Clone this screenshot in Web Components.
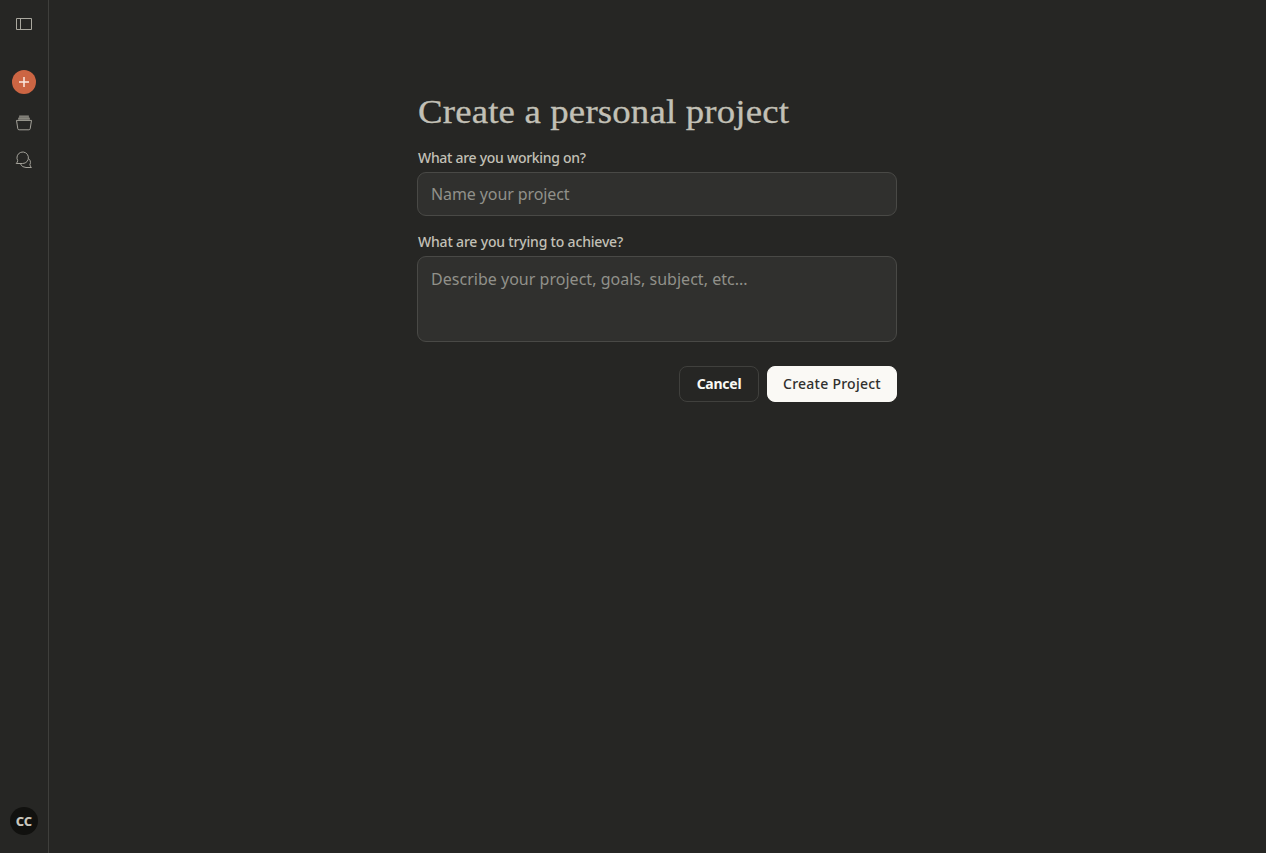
<!DOCTYPE html>
<html lang="en">
<head>
<meta charset="utf-8">
<title>Create a personal project</title>
<style>
	html, body { height: 100%; }
	body {
		margin: 0;
		background: #262624;
		color: #c2c0b6;
		font-family: "Noto Sans", "Open Sans", sans-serif;
		overflow: hidden;
	}
</style>
</head>
<body>
<app-shell>
	<side-bar slot="nav">
		<nav-button label="Open sidebar">
			<svg width="18" height="16" viewBox="0 0 18 16" fill="none" stroke="#aaa89f"><path d="M1.5 2.5h15v11h-15zM5.5 2.5v11"/></svg>
		</nav-button>
		<nav-button class="new" variant="accent" label="New chat">
			<svg width="12" height="12" viewBox="0 0 12 12" stroke="#fbe9e1" stroke-width="1.5"><path d="M6 1v10M1 6h10"/></svg>
		</nav-button>
		<nav-button class="projects" label="Projects">
			<svg width="18" height="18" viewBox="0 0 18 18" fill="none" stroke="#a3a199" stroke-linejoin="round"><path d="M1.5 6.4h15l-1.3 8.3q-.2 1.1-1.3 1.1H4.1q-1.1 0-1.3-1.1z"/><path d="M3 5.9 4.3 2h9.4L15 5.9z" fill="#74726c" stroke="none"/><path d="M3.1 4.3h11.8M4.2 2h9.6" stroke="#8d8b83"/></svg>
		</nav-button>
		<nav-button class="chats" label="Chats">
			<svg width="18" height="18" viewBox="0 0 18 18" fill="none" stroke="#a3a199" stroke-linejoin="round"><path d="M1.2 12.5H7.7A5.75 5.75 0 1 0 2.7 9.6Q2.6 11.2 1.2 12.5z"/><path d="M5.4 12.8Q6.8 16.5 11 16.5h5.4Q15.1 15.2 14.9 13.7Q16 11.6 15.1 9.6Q14.6 8.3 13.6 7.7"/></svg>
		</nav-button>
		<user-avatar slot="footer">CC</user-avatar>
	</side-bar>
	<project-form>
		<span slot="title">Create a personal project</span>
		<form-field class="name" label="What are you working on?" placeholder="Name your project"></form-field>
		<form-field class="description" label="What are you trying to achieve?" placeholder="Describe your project, goals, subject, etc..." multiline></form-field>
		<action-button slot="actions">Cancel</action-button>
		<action-button slot="actions" variant="primary">Create Project</action-button>
	</project-form>
</app-shell>
<script>
// attaches an open shadow root filled from the given markup
const render = (el, html) => {
	const template = document.createElement('template');
	template.innerHTML = html;
	el.attachShadow({ mode: 'open' }).appendChild(template.content.cloneNode(true));
};

class AppShell extends HTMLElement {
	constructor() {
		super();
		render(this, `
<style>
	:host { display: grid; grid-template-columns: 49px 1fr; height: 100vh; }
	main { display: flex; justify-content: center; align-items: flex-start; padding-right: 1px; }
</style>
<slot name="nav"></slot>
<main><slot></slot></main>
`);
	}
}

class SideBar extends HTMLElement {
	constructor() {
		super();
		render(this, `
<style>
	:host {
		display: flex;
		flex-direction: column;
		box-sizing: border-box;
		padding: 12px 0 18px;
		border-right: 1px solid #3f3f3c;
	}
	nav { display: flex; flex-direction: column; align-items: center; flex: 1; }
	footer { display: flex; justify-content: center; }
	::slotted(.new) { margin-top: 34px; }
	::slotted(.projects) { margin-top: 17px; }
	::slotted(.chats) { margin-top: 13px; }
</style>
<nav><slot></slot></nav>
<footer><slot name="footer"></slot></footer>
`);
	}
}

class NavButton extends HTMLElement {
	constructor() {
		super();
		render(this, `
<style>
	:host { display: block; width: 24px; height: 24px; }
	button {
		display: flex;
		align-items: center;
		justify-content: center;
		width: 100%;
		height: 100%;
		padding: 0;
		border: 0;
		border-radius: 50%;
		background: none;
		cursor: pointer;
	}
	:host([variant="accent"]) button { background: #cc6543; }
</style>
<button><slot></slot></button>
`);
		this.shadowRoot.querySelector('button').setAttribute('aria-label', this.getAttribute('label'));
	}
}

class UserAvatar extends HTMLElement {
	constructor() {
		super();
		render(this, `
<style>
	:host {
		display: flex;
		align-items: center;
		justify-content: center;
		width: 28px;
		height: 28px;
		border-radius: 50%;
		background: #11110f;
		color: #c8c6bc;
		font-size: 13px;
		font-weight: 800;
	}
</style>
<slot></slot>
`);
	}
}

class ProjectForm extends HTMLElement {
	constructor() {
		super();
		render(this, `
<style>
	:host { display: block; width: 480px; padding-top: 92px; }
	h1 {
		margin: 0 0 16px 1px;
		font: 400 34px/40px "Liberation Serif", serif;
		letter-spacing: 0.15px;
		white-space: nowrap;
		transform: scaleX(1.083);
		transform-origin: left;
		-webkit-text-stroke: 0.3px currentColor;
	}
	.fields { display: flex; flex-direction: column; gap: 16px; }
	.actions { display: flex; justify-content: flex-end; gap: 8px; margin-top: 24px; }
	::slotted(.name) { --label-spacing: -0.29px; --control-spacing: -0.1px; }
	::slotted(.description) { --label-spacing: -0.18px; --control-spacing: 0.02px; }
</style>
<h1><slot name="title"></slot></h1>
<div class="fields"><slot></slot></div>
<div class="actions"><slot name="actions"></slot></div>
`);
	}
}

class FormField extends HTMLElement {
	constructor() {
		super();
		const control = this.hasAttribute('multiline')
			? '<textarea id="control"></textarea>'
			: '<input id="control" type="text">';
		render(this, `
<style>
	:host { display: flex; flex-direction: column; gap: 4px; }
	label {
		padding-left: 1px;
		font-size: 14px;
		font-weight: 500;
		line-height: 20px;
		letter-spacing: var(--label-spacing, 0);
	}
	#control {
		display: block;
		box-sizing: border-box;
		width: 100%;
		height: 44px;
		padding: 0 13px;
		border: 1px solid #494946;
		border-radius: 9px;
		outline: none;
		resize: none;
		background: #30302e;
		color: inherit;
		font: 400 16px/24px "Noto Sans", sans-serif;
		letter-spacing: var(--control-spacing, 0);
	}
	textarea#control { height: 86px; padding: 10px 13px; }
	#control::placeholder { color: #91908a; opacity: 1; }
</style>
<label for="control"></label>
${control}
`);
		this.shadowRoot.querySelector('label').innerText = this.getAttribute('label');
		this.shadowRoot.getElementById('control').placeholder = this.getAttribute('placeholder');
	}
}

class ActionButton extends HTMLElement {
	constructor() {
		super();
		render(this, `
<style>
	:host { display: block; width: 80px; height: 36px; }
	button {
		box-sizing: border-box;
		width: 100%;
		height: 100%;
		padding: 0;
		border: 1px solid #40403d;
		border-radius: 8px;
		background: none;
		color: #faf9f5;
		font: 700 14px/20px "Noto Sans", sans-serif;
		letter-spacing: -0.25px;
		white-space: nowrap;
		cursor: pointer;
	}
	:host([variant="primary"]) { width: 130px; }
	:host([variant="primary"]) button {
		border-color: #faf9f5;
		background: #faf9f5;
		color: #30302e;
		font-weight: 500;
		letter-spacing: 0.25px;
	}
</style>
<button><slot></slot></button>
`);
	}
}

customElements.define('app-shell', AppShell);
customElements.define('side-bar', SideBar);
customElements.define('nav-button', NavButton);
customElements.define('user-avatar', UserAvatar);
customElements.define('project-form', ProjectForm);
customElements.define('form-field', FormField);
customElements.define('action-button', ActionButton);
</script>
</body>
</html>
